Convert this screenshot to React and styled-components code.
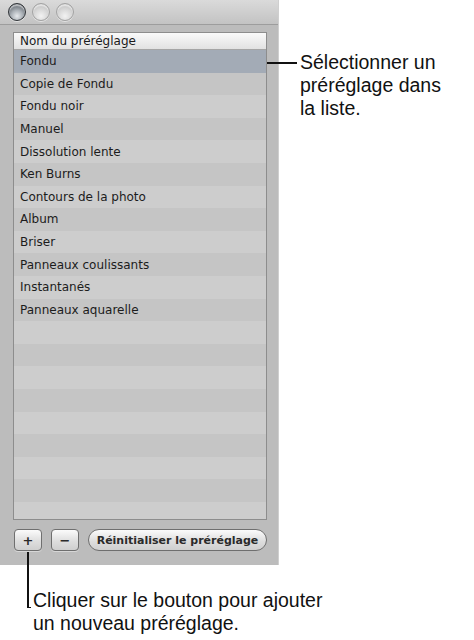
import React from "react";
import styled, { createGlobalStyle } from "styled-components";

const Global = createGlobalStyle`
  html, body { margin: 0; padding: 0; background: #fff; }
  body { font-family: "Liberation Sans", Arial, sans-serif; }
  * { box-sizing: border-box; }
`;

const Page = styled.div`
  position: relative;
  width: 474px;
  height: 640px;
  overflow: hidden;
  display: grid;
  grid-template-columns: 279px 1fr;
  grid-template-rows: 565px 1fr;
`;

const Window = styled.div`
  grid-column: 1;
  grid-row: 1;
  display: flex;
  flex-direction: column;
  background: #bcbcbc;
  border-right: 1px solid #cfcfcf;
`;

const TitleBar = styled.div`
  height: 25px;
  display: flex;
  align-items: center;
  gap: 6px;
  padding: 0 0 1px 8px;
  background: linear-gradient(#dadada, #c3c3c3);
  border-bottom: 1px solid #9d9d9d;
`;

const Light = styled.div`
  width: 18px;
  height: 18px;
  border-radius: 50%;
  background: ${(p) =>
    p.$dark
      ? "radial-gradient(circle at 50% 75%, #e6e9ec 0%, #aab0b6 40%, #6a7077 75%, #3c4046 100%)"
      : "radial-gradient(circle at 50% 75%, #f2f2f2 0%, #d6d6d6 50%, #bcbcbc 85%, #a8a8a8 100%)"};
  border: 1.5px solid ${(p) => (p.$dark ? "#2f3337" : "#a3a3a3")};
  box-shadow: inset 0 2px 1px rgba(255, 255, 255, 0.55), 0 1px 0 rgba(255, 255, 255, 0.5);
`;

const Body = styled.div`
  flex: 1;
  display: flex;
  flex-direction: column;
  padding: 7px 11px 13px 13px;
`;

const List = styled.div`
  height: 488px;
  border: 1px solid #8d8d8d;
  display: flex;
  flex-direction: column;
  overflow: hidden;
  background: #c8c8c8;
`;

const Header = styled.div`
  height: 17px;
  flex: 0 0 17px;
  display: flex;
  align-items: center;
  padding-left: 6px;
  font-family: "DejaVu Sans", sans-serif;
  font-size: 12px;
  color: #1a1a1a;
  background: linear-gradient(#fafafa, #e2e2e2);
  border-bottom: 1px solid #a5a5a5;
`;

const Row = styled.div`
  height: 22.6px;
  flex: 0 0 22.6px;
  display: flex;
  align-items: center;
  padding-left: 6px;
  font-family: "DejaVu Sans", sans-serif;
  font-size: 12px;
  color: #1c1c1c;
  background: ${(p) => (p.$selected ? "#a3abb6" : p.$odd ? "#c5c5c5" : "#cdcdcd")};
  white-space: nowrap;
`;

const Buttons = styled.div`
  margin-top: 9px;
  display: flex;
  align-items: center;
  gap: 9px;
  padding-left: 1px;
`;

const SquareButton = styled.div`
  width: 28px;
  height: 22px;
  border-radius: 4px;
  border: 1px solid #6f6f6f;
  background: linear-gradient(#fbfbfb, #dedede 55%, #cfcfcf);
  box-shadow: 0 1px 0 rgba(255, 255, 255, 0.4);
  display: flex;
  align-items: center;
  justify-content: center;
  font-family: "DejaVu Sans", sans-serif;
  font-weight: bold;
  font-size: 13px;
  color: #2a2a2a;
  line-height: 1;
`;

const PillButton = styled.div`
  width: 179px;
  height: 22px;
  border-radius: 11px;
  border: 1px solid #6f6f6f;
  background: linear-gradient(#fbfbfb, #dedede 55%, #cfcfcf);
  display: flex;
  align-items: center;
  justify-content: center;
  font-family: "DejaVu Sans", sans-serif;
  font-weight: bold;
  font-size: 11px;
  color: #2a2a2a;
  white-space: nowrap;
`;

const CalloutText = styled.div`
  font-family: "Liberation Sans", Arial, sans-serif;
  font-size: 19.5px;
  line-height: 23px;
  color: #111;
  white-space: nowrap;
`;

const RightCallout = styled(CalloutText)`
  grid-column: 2;
  grid-row: 1;
  padding: 51px 0 0 21px;
`;

const BottomCallout = styled(CalloutText)`
  grid-column: 1 / span 2;
  grid-row: 2;
  padding: 24px 0 0 33px;
`;

const Leader = styled.div`
  position: absolute;
  background: #111;
`;

const items = [
  "Fondu",
  "Copie de Fondu",
  "Fondu noir",
  "Manuel",
  "Dissolution lente",
  "Ken Burns",
  "Contours de la photo",
  "Album",
  "Briser",
  "Panneaux coulissants",
  "Instantanés",
  "Panneaux aquarelle",
];

export default function App() {
  const rows = [];
  for (let i = 0; i < 22; i++) {
    rows.push(
      <Row key={i} $selected={i === 0} $odd={i % 2 === 1}>
        {items[i] || ""}
      </Row>
    );
  }
  return (
    <>
      <Global />
      <Page>
        <Window>
          <TitleBar>
            <Light $dark />
            <Light />
            <Light />
          </TitleBar>
          <Body>
            <List>
              <Header>Nom du préréglage</Header>
              {rows}
            </List>
            <Buttons>
              <SquareButton>+</SquareButton>
              <SquareButton>−</SquareButton>
              <PillButton>Réinitialiser le préréglage</PillButton>
            </Buttons>
          </Body>
        </Window>
        <RightCallout>
          Sélectionner un
          <br />
          préréglage dans
          <br />
          la liste.
        </RightCallout>
        <BottomCallout>
          Cliquer sur le bouton pour ajouter
          <br />
          un nouveau préréglage.
        </BottomCallout>
        <Leader style={{ left: 267, top: 62, width: 30, height: 1.5 }} />
        <Leader style={{ left: 27, top: 552, width: 1.5, height: 56 }} />
        <Leader style={{ left: 27, top: 606.5, width: 4, height: 1.5 }} />
      </Page>
    </>
  );
}
